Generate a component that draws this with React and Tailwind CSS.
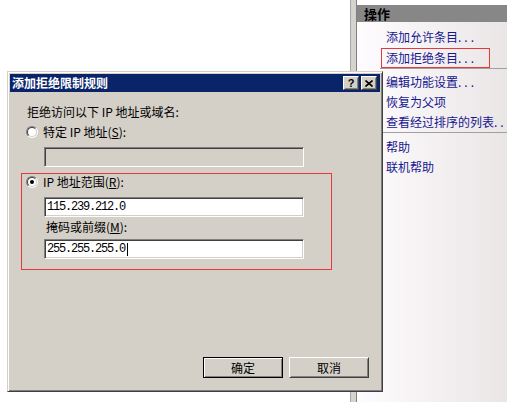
import React from "react";

// Win classic 3D edges
const raised =
  "border border-t-[#d4d0c8] border-l-[#d4d0c8] border-b-[#404040] border-r-[#404040] shadow-[inset_1px_1px_0_#ffffff,inset_-1px_-1px_0_#808080]";
const button =
  "border border-t-white border-l-white border-b-[#404040] border-r-[#404040] shadow-[inset_1px_1px_0_#d4d0c8,inset_-1px_-1px_0_#808080] bg-[#d4d0c8]";
const sunken =
  "border border-t-[#808080] border-l-[#808080] border-b-white border-r-white shadow-[inset_1px_1px_0_#404040,inset_-1px_-1px_0_#d4d0c8]";

const Radio = ({ checked }) => (
  <div className="w-[12px] h-[12px] rounded-full border border-t-[#808080] border-l-[#808080] border-b-white border-r-white">
    <div className="w-full h-full rounded-full border border-t-[#404040] border-l-[#404040] border-b-[#d4d0c8] border-r-[#d4d0c8] bg-white flex items-center justify-center">
      {checked && <div className="w-[4px] h-[4px] rounded-full bg-black" />}
    </div>
  </div>
);

const Dots = () => <span className="tracking-[3px]">...</span>;

const ActionLink = ({ children }) => (
  <div className="h-[20px] leading-[20px] pl-[29px] whitespace-nowrap text-[#16168e]">
    {children}
  </div>
);

const App = () => {
  return (
    <main className="relative w-[507px] h-[402px] overflow-hidden bg-white flex font-['Noto_Sans_CJK_SC',sans-serif] text-[12px] text-black">
      <div className="w-[350px] shrink-0 bg-white" />

      {/* actions pane */}
      <section className="w-[157px] shrink-0 flex">
        <div className="w-[7px] shrink-0 bg-[#d6d3ce] border-l border-l-[#a8a8a8] border-r border-r-[#808080]" />
        <div className="flex-1 flex flex-col">
          <div className="h-[5px] bg-white" />
          <div className="h-[17px] mr-[5px] bg-[#878787] pl-[7px] leading-[17px] text-[13px] font-bold">
            操作
          </div>
          <div className="flex-1 flex flex-col bg-linear-to-r from-[#fffcff] to-[#e9e5e5] pt-[5px]">
            <ActionLink>
              添加允许条目<Dots />
            </ActionLink>
            <div className="mt-[1px] ml-[24px] w-[109px] h-[20px] border border-[#e8393a] pl-[4px] leading-[18px] whitespace-nowrap text-[#16168e]">
              添加拒绝条目<Dots />
            </div>
            <div className="h-[1px] bg-[#a0a0a0] ml-[23px] mr-[5px]" />
            <div className="mt-[3px]">
              <ActionLink>
                编辑功能设置<Dots />
              </ActionLink>
              <ActionLink>恢复为父项</ActionLink>
              <ActionLink>
                查看经过排序的列表<Dots />
              </ActionLink>
            </div>
            <div className="h-[1px] bg-[#a0a0a0] ml-[23px]" />
            <div className="mt-[4px]">
              <ActionLink>帮助</ActionLink>
              <ActionLink>联机帮助</ActionLink>
            </div>
          </div>
        </div>
      </section>

      {/* dialog */}
      <div className={`absolute left-[7px] top-[71px] w-[376px] h-[321px] flex flex-col bg-[#d4d0c8] p-[2px] ${raised}`}>
        <div className="h-[18px] bg-[#0a246a] flex items-center justify-between pl-[2px] pr-[3px]">
          <span className="text-white font-bold leading-[18px]">添加拒绝限制规则</span>
          <div className="flex gap-[2px]">
            <div className={`w-[16px] h-[14px] flex items-center justify-center ${button}`}>
              <span className="font-['Liberation_Sans',sans-serif] font-bold text-[11px] leading-none">?</span>
            </div>
            <div className={`w-[16px] h-[14px] flex items-center justify-center ${button}`}>
              <svg width="8" height="7" viewBox="0 0 8 7">
                <path d="M0.5 0.5 L7.5 6.5 M7.5 0.5 L0.5 6.5" stroke="#000" strokeWidth="1.6" />
              </svg>
            </div>
          </div>
        </div>

        <div className="flex-1 flex flex-col pl-[11px]">
          <div className="mt-[13px] pl-[6px] leading-[14px]">拒绝访问以下 IP 地址或域名:</div>

          <div className="mt-[6px] pl-[5px] h-[14px] flex items-center gap-[5px]">
            <Radio />
            <span className="leading-[14px]">
              特定 IP 地址(<span className="underline">S</span>):
            </span>
          </div>

          <div className={`mt-[8px] ml-[23px] w-[260px] h-[20px] bg-[#d4d0c8] ${sunken}`} />

          <div className="mt-[6px] w-[311px] h-[97px] border border-[#e8393a] pt-[1px] flex flex-col">
            <div className="pl-[4px] h-[14px] flex items-center gap-[5px]">
              <Radio checked />
              <span className="leading-[14px]">
                IP 地址范围(<span className="underline">R</span>):
              </span>
            </div>
            <div className={`mt-[8px] ml-[22px] w-[260px] h-[20px] bg-white flex items-center pl-[2px] font-['Liberation_Mono',monospace] tracking-[-1.2px] ${sunken}`}>
              115.239.212.0
            </div>
            <div className="mt-[3px] ml-[24px] leading-[14px]">
              掩码或前缀(<span className="underline">M</span>):
            </div>
            <div className={`mt-[5px] ml-[22px] w-[260px] h-[20px] bg-white flex items-center pl-[2px] font-['Liberation_Mono',monospace] tracking-[-1.2px] ${sunken}`}>
              255.255.255.0
              <span className="inline-block w-[1px] h-[13px] bg-black ml-[2px]" />
            </div>
          </div>

          <div className="mt-auto mb-[11px] pr-[11px] flex justify-end gap-[6px]">
            <div className="w-[80px] h-[21px] border border-black">
              <div className="w-full h-full bg-[#d4d0c8] shadow-[inset_1px_1px_0_#ffffff,inset_-1px_-1px_0_#808080] flex items-center justify-center leading-none">
                确定
              </div>
            </div>
            <div className={`w-[80px] h-[21px] flex items-center justify-center leading-none ${button}`}>
              取消
            </div>
          </div>
        </div>
      </div>
    </main>
  );
};

export default App;
